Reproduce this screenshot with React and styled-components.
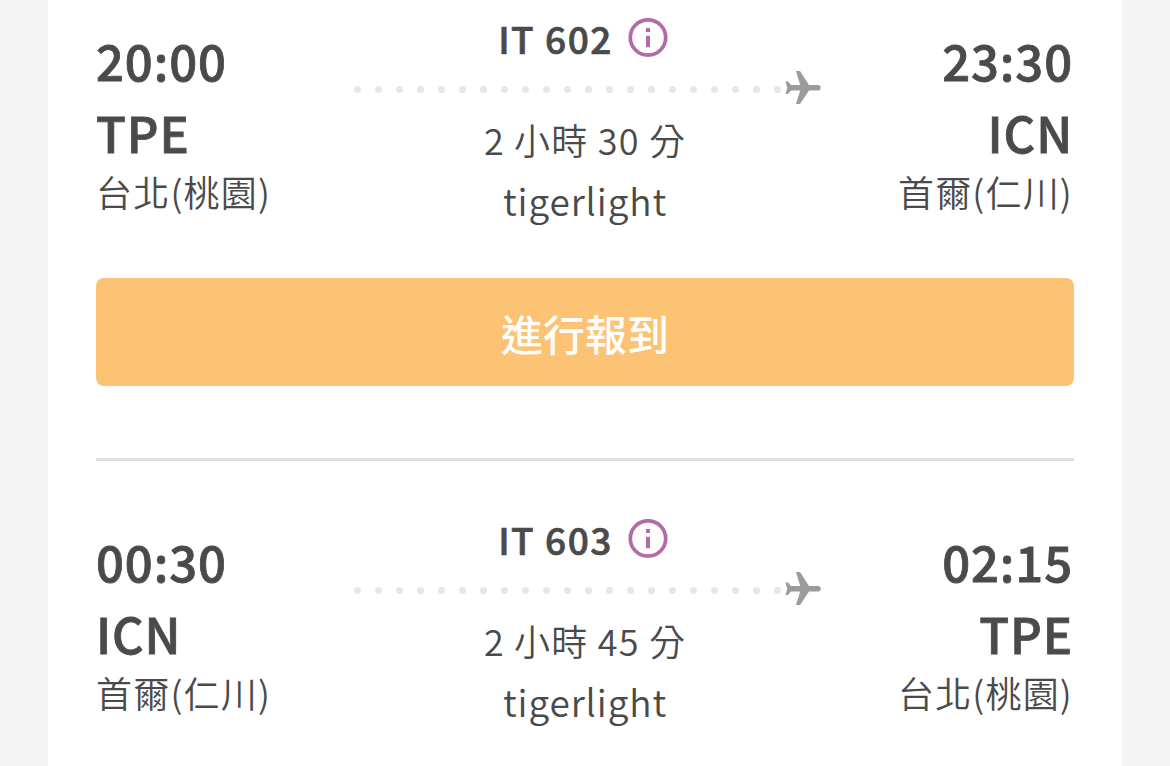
import React from "react";
import styled, { createGlobalStyle } from "styled-components";

const GlobalStyle = createGlobalStyle`
  * {
    box-sizing: border-box;
  }
  body {
    margin: 0;
    background: #f3f3f3;
    font-family: "Noto Sans CJK TC", "Noto Sans", sans-serif;
    color: #4a4a4a;
  }
`;

const Card = styled.main`
  width: 1074px;
  height: 766px;
  margin-left: 48px;
  padding: 0 48px;
  overflow: hidden;
  background: #fff;
`;

const Flight = styled.section`
  display: flex;
  justify-content: space-between;
  height: 242px;
`;

const Airport = styled.div`
  display: flex;
  flex-direction: column;
  width: 240px;
  padding: 24px 1px 0 0;
  text-align: ${({ $right }) => ($right ? "right" : "left")};
`;

const Time = styled.div`
  font-size: 49px;
  font-weight: 500;
  line-height: 72px;
  letter-spacing: 0.9px;
  -webkit-text-stroke: 0.8px currentColor; /* slightly heavier than medium */
`;

const Code = styled(Time)``;

const City = styled.div`
  font-size: 36px;
  font-weight: 350;
  line-height: 46px;
  letter-spacing: 1.2px;
`;

const Details = styled.div`
  display: flex;
  flex-direction: column;
  align-items: center;
  width: 474px;
`;

const FlightNumber = styled.div`
  display: flex;
  align-items: center;
  gap: 15px;
  height: 76px;
  margin-right: 4px;
  font-size: 37px;
  font-weight: 500;
  letter-spacing: 1.5px;
  -webkit-text-stroke: 0.7px currentColor;
`;

const Route = styled.svg`
  display: block;
  width: 474px;
  height: 33px;
  overflow: visible;
`;

const Info = styled.div`
  font-size: 36px;
  font-weight: 350;
  line-height: 60px;
  letter-spacing: 1.2px;
`;

const Aircraft = styled(Info)`
  font-size: 37px;
  line-height: 62px;
  letter-spacing: 0.9px;
`;

const CheckInButton = styled.button`
  display: block;
  width: 100%;
  height: 108px;
  margin-top: 36px;
  padding: 0;
  border: 0;
  border-radius: 8px;
  background: #fbc373;
  color: #fff;
  font: 500 42px "Noto Sans CJK TC", sans-serif;
  cursor: pointer;
`;

const Divider = styled.hr`
  height: 3px;
  margin: 72px 0 40px;
  border: 0;
  background: #dedfdf;
`;

const InfoIcon = () => (
  <svg width="40" height="40" viewBox="0 0 40 40" fill="none">
    <circle cx="20" cy="19.5" r="17.7" stroke="#b46aa6" strokeWidth="3.7" />
    <path d="M18 10h4v4h-4zM18 17.7h4v11.5h-4z" fill="#b46aa6" />
  </svg>
);

const FlightRow = ({ from, to, number, duration }) => (
  <Flight>
    <Airport>
      <Time>{from.time}</Time>
      <Code>{from.code}</Code>
      <City>{from.city}</City>
    </Airport>
    <Details>
      <FlightNumber>
        {number}
        <InfoIcon />
      </FlightNumber>
      <Route viewBox="0 0 474 33">
        {Array.from({ length: 21 }, (_, i) => (
          <circle key={i} cx={9.5 + i * 21} cy="13.5" r="3.5" fill="#e5e6e7" />
        ))}
        <path
          d="M437.5 5.5H440L443 9H452.2L448-5H452L461 9H470a2.7 2.7 0 0 1 0 5.4H461L452 28H448L452.2 14.4H443L440 18H437.5L439.3 11.8Z"
          fill="#9b9b9b"
        />
      </Route>
      <Info>{duration}</Info>
      <Aircraft>tigerlight</Aircraft>
    </Details>
    <Airport $right>
      <Time>{to.time}</Time>
      <Code>{to.code}</Code>
      <City>{to.city}</City>
    </Airport>
  </Flight>
);

const App = () => (
  <>
    <GlobalStyle />
    <Card>
      <FlightRow
        number="IT 602"
        duration="2 小時 30 分"
        from={{ time: "20:00", code: "TPE", city: "台北(桃園)" }}
        to={{ time: "23:30", code: "ICN", city: "首爾(仁川)" }}
      />
      <CheckInButton>進行報到</CheckInButton>
      <Divider />
      <FlightRow
        number="IT 603"
        duration="2 小時 45 分"
        from={{ time: "00:30", code: "ICN", city: "首爾(仁川)" }}
        to={{ time: "02:15", code: "TPE", city: "台北(桃園)" }}
      />
    </Card>
  </>
);

export default App;
